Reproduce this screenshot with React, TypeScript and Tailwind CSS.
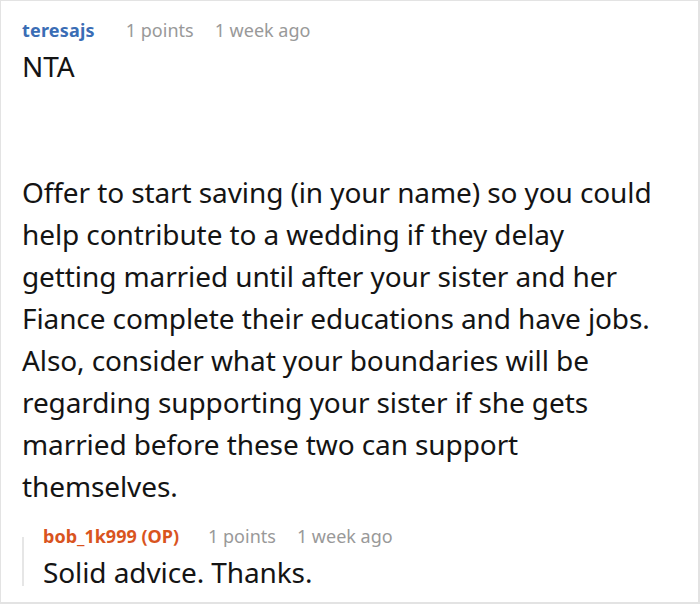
import React from "react";

const font = { fontFamily: '"Noto Sans", "Open Sans", sans-serif' };

const lines = [
  "Offer to start saving (in your name) so you could",
  "help contribute to a wedding if they delay",
  "getting married until after your sister and her",
  "Fiance complete their educations and have jobs.",
  "Also, consider what your boundaries will be",
  "regarding supporting your sister if she gets",
  "married before these two can support",
  "themselves.",
];

export default function App() {
  return (
    <div
      className="w-[700px] h-[604px] bg-white border border-r-2 border-b-2 border-[#e3e3e3] box-border overflow-hidden"
      style={font}
    >
      <div className="pl-[21px] pt-[15px]">
        <div className="flex items-baseline leading-[28px] text-[18px]">
          <span className="font-bold text-[#3a6db5] tracking-[0.2px]">teresajs</span>
          <span className="ml-[31px] text-[#999999]">1 points</span>
          <span className="ml-[21px] text-[#999999]">1 week ago</span>
        </div>
        <div className="mt-[1px] text-[28px] leading-[42px] text-[#141414] tracking-[-0.1px]">
          <p>NTA</p>
          <p>&nbsp;</p>
          <p>&nbsp;</p>
          <p className="whitespace-nowrap">
            {lines.map((l, i) => (
              <React.Fragment key={i}>
                {l}
                {i < lines.length - 1 && <br />}
              </React.Fragment>
            ))}
          </p>
        </div>
        <div className="mt-[15px] flex">
          <div className="w-[2px] bg-[#e6e6e6] mt-[15px] h-[49px]" />
          <div className="pl-[19px]">
            <div className="flex items-baseline leading-[28px] text-[18px]">
              <span className="font-bold text-[#d9541e]">bob_1k999 (OP)</span>
              <span className="ml-[29px] text-[#999999]">1 points</span>
              <span className="ml-[21px] text-[#999999]">1 week ago</span>
            </div>
            <div className="mt-[1px] text-[28px] leading-[42px] text-[#141414] tracking-[-0.1px]">
              Solid advice. Thanks.
            </div>
          </div>
        </div>
      </div>
    </div>
  );
}
